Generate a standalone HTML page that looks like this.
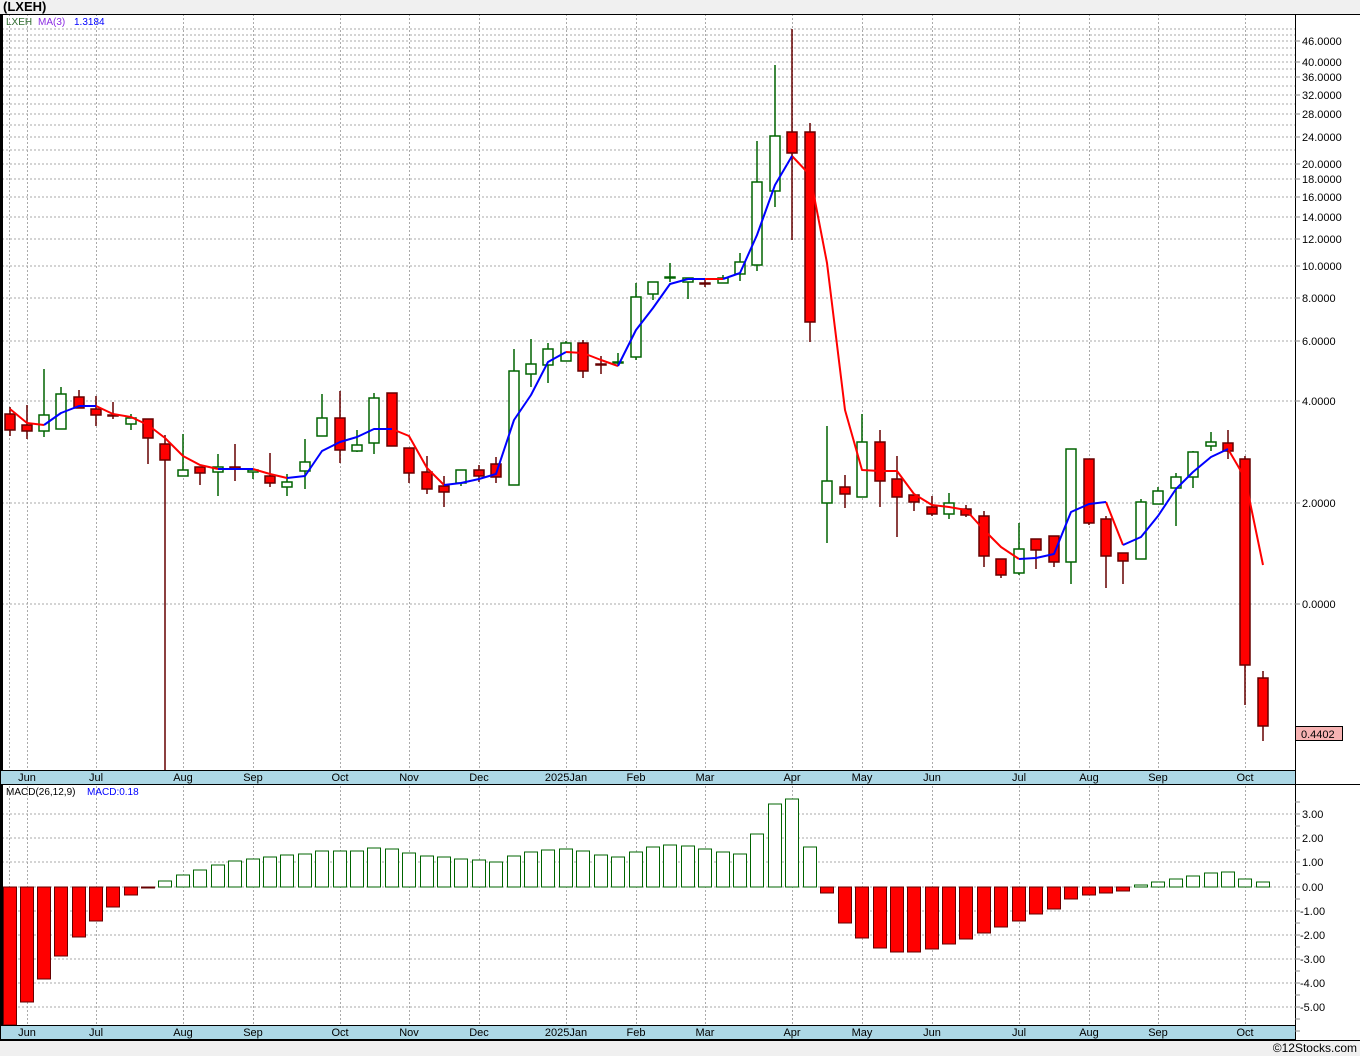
<!DOCTYPE html>
<html><head><meta charset="utf-8"><style>
html,body{margin:0;padding:0;background:#f0f0f0;}
svg{display:block;font-family:"Liberation Sans",sans-serif;}
</style></head><body>
<svg width="1360" height="1056" viewBox="0 0 1360 1056" xmlns="http://www.w3.org/2000/svg">
<rect x="0" y="0" width="1360" height="1056" fill="#f0f0f0"/>
<text x="3" y="11" font-size="13" font-weight="bold" fill="#000">(LXEH)</text>
<rect x="0" y="14" width="1360" height="1026" fill="#fff"/>
<g stroke="#aaa" stroke-width="1" stroke-dasharray="2,2" fill="none">
<path d="M2 29H1295M2 35H1295M2 41H1295M2 48H1295M2 55H1295M2 62H1295M2 69H1295M2 77H1295M2 86H1295M2 95H1295M2 104H1295M2 114H1295M2 125H1295M2 137H1295M2 150H1295M2 164H1295M2 179H1295M2 197H1295M2 217H1295M2 239H1295M2 266H1295M2 298H1295M2 341H1295M2 401H1295M2 503H1295M2 604H1295"/>
<path d="M2 814H1295M2 838H1295M2 862H1295M2 887H1295M2 911H1295M2 935H1295M2 959H1295M2 983H1295M2 1007H1295"/>
<path d="M9.5 14V1025M27.5 14V1025M96.5 14V1025M183.5 14V1025M253.5 14V1025M340.5 14V1025M409.5 14V1025M479.5 14V1025M566.5 14V1025M636.5 14V1025M705.5 14V1025M792.5 14V1025M862.5 14V1025M932.5 14V1025M1019.5 14V1025M1089.5 14V1025M1158.5 14V1025M1245.5 14V1025"/>
</g>
<path fill="none" stroke="#006400" stroke-width="1.5" d="M44 369V437M61 387V429M131 414V430M183 434V476M218 454V496M253 470V479M287 474V496M305 439V489M322 394V436M357 430V452M374 393V454M461 470V486M514 349V485M531 339V387M548 343V383M566 341V361M618 353V366M636 283V360M653 282V300M670 263V282M688 278V299M723 275V283M740 253V281M757 141V271M775 65V207M827 426V543M862 414V497M949 493V519M1019 523V575M1071 449V584M1141 499V559M1158 487V504M1176 473V526M1193 451V488M1211 432V451"/>
<path fill="none" stroke="#660000" stroke-width="1.5" d="M10 407V436M27 405V439M79 390V408M96 396V426M113 402V419M148 419V464M165 435V770M200 467V485M235 444V481M270 453V487M340 391V463M392 393V446M409 448V483M427 456V494M444 476V507M479 465V482M496 457V483M583 340V378M601 356V374M705 278V287M792 29V240M810 123V342M845 475V508M880 430V507M897 456V537M914 495V511M932 496V516M966 505V517M984 511V567M1001 559V578M1036 539V569M1054 536V567M1089 459V525M1106 516V588M1123 553V584M1228 430V459M1245 456V705M1263 671V741"/>
<g fill="#fff" stroke="#006400" stroke-width="1.5">
<rect x="39" y="415" width="10" height="16"/><rect x="56" y="394" width="10" height="35"/><rect x="126" y="418" width="10" height="6"/><rect x="178" y="470" width="10" height="6"/><rect x="213" y="467" width="10" height="5"/><rect x="248" y="470" width="10" height="2"/><rect x="282" y="482" width="10" height="5"/><rect x="300" y="462" width="10" height="9"/><rect x="317" y="418" width="10" height="18"/><rect x="352" y="445" width="10" height="6"/><rect x="369" y="398" width="10" height="45"/><rect x="456" y="470" width="10" height="13"/><rect x="509" y="371" width="10" height="114"/><rect x="526" y="364" width="10" height="10"/><rect x="543" y="349" width="10" height="16"/><rect x="561" y="343" width="10" height="18"/><rect x="613" y="362" width="10" height="1"/><rect x="631" y="297" width="10" height="60"/><rect x="648" y="282" width="10" height="12"/><rect x="665" y="277" width="10" height="1"/><rect x="683" y="278" width="10" height="4"/><rect x="718" y="278" width="10" height="5"/><rect x="735" y="262" width="10" height="12"/><rect x="752" y="182" width="10" height="83"/><rect x="770" y="136" width="10" height="55"/><rect x="822" y="481" width="10" height="22"/><rect x="857" y="442" width="10" height="55"/><rect x="944" y="503" width="10" height="11"/><rect x="1014" y="549" width="10" height="24"/><rect x="1066" y="449" width="10" height="113"/><rect x="1136" y="502" width="10" height="57"/><rect x="1153" y="491" width="10" height="13"/><rect x="1171" y="477" width="10" height="11"/><rect x="1188" y="452" width="10" height="25"/><rect x="1206" y="442" width="10" height="4"/>
</g>
<g fill="#ff0000" stroke="#660000" stroke-width="1.5">
<rect x="5" y="414" width="10" height="16"/><rect x="22" y="425" width="10" height="6"/><rect x="74" y="397" width="10" height="11"/><rect x="91" y="409" width="10" height="6"/><rect x="108" y="415" width="10" height="1"/><rect x="143" y="419" width="10" height="19"/><rect x="160" y="444" width="10" height="16"/><rect x="195" y="467" width="10" height="6"/><rect x="230" y="467" width="10" height="2"/><rect x="265" y="476" width="10" height="7"/><rect x="335" y="418" width="10" height="32"/><rect x="387" y="393" width="10" height="53"/><rect x="404" y="448" width="10" height="25"/><rect x="422" y="472" width="10" height="17"/><rect x="439" y="486" width="10" height="6"/><rect x="474" y="470" width="10" height="6"/><rect x="491" y="464" width="10" height="13"/><rect x="578" y="343" width="10" height="28"/><rect x="596" y="364" width="10" height="1"/><rect x="700" y="283" width="10" height="1"/><rect x="787" y="132" width="10" height="21"/><rect x="805" y="132" width="10" height="190"/><rect x="840" y="487" width="10" height="7"/><rect x="875" y="442" width="10" height="39"/><rect x="892" y="479" width="10" height="18"/><rect x="909" y="495" width="10" height="7"/><rect x="927" y="507" width="10" height="7"/><rect x="961" y="509" width="10" height="6"/><rect x="979" y="516" width="10" height="40"/><rect x="996" y="559" width="10" height="16"/><rect x="1031" y="539" width="10" height="11"/><rect x="1049" y="536" width="10" height="26"/><rect x="1084" y="459" width="10" height="64"/><rect x="1101" y="519" width="10" height="37"/><rect x="1118" y="553" width="10" height="8"/><rect x="1223" y="443" width="10" height="8"/><rect x="1240" y="459" width="10" height="206"/><rect x="1258" y="678" width="10" height="48"/>
</g>
<path fill="none" stroke="#ff0000" stroke-width="2" stroke-linejoin="round" d="M10 409L27 423L44 425M96 406L113 414L131 417L148 425L165 438L183 456L200 465L218 469M253 469L270 474L287 478M392 429L409 436L427 468L444 485M566 352L583 353L601 360L618 366M705 279L723 279M792 156L810 175L827 263L845 410L862 470L880 471L897 471L914 494L932 505L949 507L966 510L984 530L1001 547L1019 559M1106 502L1123 545M1228 449L1245 478L1263 565"/>
<path fill="none" stroke="#0000ff" stroke-width="2" stroke-linejoin="round" d="M44 425L61 413L79 406L96 406M218 469L235 469L253 469M287 478L305 476L322 451L340 442L357 437L374 429L392 429M444 485L461 483L479 479L496 474L514 420L531 395L548 362L566 352M618 366L636 330L653 308L670 284L688 279L705 279M723 279L740 273L757 235L775 185L792 156M1019 559L1036 558L1054 554L1071 512L1089 504L1106 502M1123 545L1141 537L1158 516L1176 489L1193 472L1211 457L1228 449"/>
<g fill="#ff0000" stroke="#660000" stroke-width="1">
<rect x="3.5" y="887" width="13" height="138"/><rect x="20.5" y="887" width="13" height="115"/><rect x="37.5" y="887" width="13" height="92"/><rect x="54.5" y="887" width="13" height="69"/><rect x="72.5" y="887" width="13" height="50"/><rect x="89.5" y="887" width="13" height="34"/><rect x="106.5" y="887" width="13" height="20"/><rect x="124.5" y="887" width="13" height="8"/><rect x="141.5" y="887" width="13" height="1"/>
<rect x="820.5" y="887" width="13" height="6"/><rect x="838.5" y="887" width="13" height="36"/><rect x="855.5" y="887" width="13" height="51"/><rect x="873.5" y="887" width="13" height="61"/><rect x="890.5" y="887" width="13" height="65"/><rect x="907.5" y="887" width="13" height="65"/><rect x="925.5" y="887" width="13" height="62"/><rect x="942.5" y="887" width="13" height="57"/><rect x="959.5" y="887" width="13" height="52"/><rect x="977.5" y="887" width="13" height="46"/><rect x="994.5" y="887" width="13" height="40"/><rect x="1012.5" y="887" width="13" height="34"/><rect x="1029.5" y="887" width="13" height="27"/><rect x="1047.5" y="887" width="13" height="22"/><rect x="1064.5" y="887" width="13" height="12"/><rect x="1082.5" y="887" width="13" height="8"/><rect x="1099.5" y="887" width="13" height="6"/><rect x="1116.5" y="887" width="13" height="4"/>
</g>
<g fill="#fff" stroke="#006400" stroke-width="1">
<rect x="158.5" y="881" width="13" height="6"/><rect x="176.5" y="875" width="13" height="12"/><rect x="193.5" y="870" width="13" height="17"/><rect x="211.5" y="865" width="13" height="22"/><rect x="228.5" y="861" width="13" height="26"/><rect x="246.5" y="859" width="13" height="28"/><rect x="263.5" y="857" width="13" height="30"/><rect x="280.5" y="855" width="13" height="32"/><rect x="298.5" y="854" width="13" height="33"/><rect x="315.5" y="851" width="13" height="36"/><rect x="333.5" y="851" width="13" height="36"/><rect x="350.5" y="851" width="13" height="36"/><rect x="367.5" y="848" width="13" height="39"/><rect x="385.5" y="849" width="13" height="38"/><rect x="402.5" y="853" width="13" height="34"/><rect x="420.5" y="856" width="13" height="31"/><rect x="437.5" y="857" width="13" height="30"/><rect x="454.5" y="859" width="13" height="28"/><rect x="472.5" y="860" width="13" height="27"/><rect x="489.5" y="862" width="13" height="25"/><rect x="507.5" y="856" width="13" height="31"/><rect x="524.5" y="852" width="13" height="35"/><rect x="541.5" y="850" width="13" height="37"/><rect x="559.5" y="849" width="13" height="38"/><rect x="576.5" y="851" width="13" height="36"/><rect x="594.5" y="855" width="13" height="32"/><rect x="611.5" y="857" width="13" height="30"/><rect x="629.5" y="852" width="13" height="35"/><rect x="646.5" y="847" width="13" height="40"/><rect x="663.5" y="845" width="13" height="42"/><rect x="681.5" y="846" width="13" height="41"/><rect x="698.5" y="849" width="13" height="38"/><rect x="716.5" y="852" width="13" height="35"/><rect x="733.5" y="854" width="13" height="33"/><rect x="750.5" y="834" width="13" height="53"/><rect x="768.5" y="804" width="13" height="83"/><rect x="785.5" y="799" width="13" height="88"/><rect x="803.5" y="847" width="13" height="40"/>
<rect x="1134.5" y="885" width="13" height="2"/><rect x="1151.5" y="882" width="13" height="5"/><rect x="1169.5" y="879" width="13" height="8"/><rect x="1186.5" y="876" width="13" height="11"/><rect x="1204.5" y="873" width="13" height="14"/><rect x="1221.5" y="872" width="13" height="15"/><rect x="1238.5" y="879" width="13" height="8"/><rect x="1256.5" y="882" width="13" height="5"/>
</g>
<rect x="0" y="14" width="3" height="1011" fill="#000"/>
<path d="M0 14.5H1360M1295.5 14V1040" stroke="#000" fill="none"/>
<rect x="0.5" y="770.5" width="1295" height="14" fill="#add8e6" stroke="#000"/>
<rect x="0.5" y="1025.5" width="1295" height="14" fill="#add8e6" stroke="#000"/>
<path d="M1295 784.5H1360M0 1040.5H1360" stroke="#000"/>
<g stroke="#888" fill="none">
<path d="M1295 41H1300M1295 62H1300M1295 77H1300M1295 95H1300M1295 114H1300M1295 137H1300M1295 164H1300M1295 179H1300M1295 197H1300M1295 217H1300M1295 239H1300M1295 266H1300M1295 298H1300M1295 341H1300M1295 401H1300M1295 503H1300M1295 604H1300"/>
<path d="M1295 802H1300M1295 814H1300M1295 826H1300M1295 838H1300M1295 850H1300M1295 862H1300M1295 874H1300M1295 887H1300M1295 899H1300M1295 911H1300M1295 923H1300M1295 935H1300M1295 947H1300M1295 959H1300M1295 971H1300M1295 983H1300M1295 995H1300M1295 1007H1300M1295 1019H1300M1295 1031H1300"/>
</g>
<g font-size="11" fill="#000">
<text x="1302" y="45">46.0000</text><text x="1302" y="66">40.0000</text><text x="1302" y="81">36.0000</text><text x="1302" y="99">32.0000</text><text x="1302" y="118">28.0000</text><text x="1302" y="141">24.0000</text><text x="1302" y="168">20.0000</text><text x="1302" y="183">18.0000</text><text x="1302" y="201">16.0000</text><text x="1302" y="221">14.0000</text><text x="1302" y="243">12.0000</text><text x="1302" y="270">10.0000</text><text x="1302" y="302">8.0000</text><text x="1302" y="345">6.0000</text><text x="1302" y="405">4.0000</text><text x="1302" y="507">2.0000</text><text x="1302" y="608">0.0000</text>
<text x="1302" y="818">3.00</text><text x="1302" y="842">2.00</text><text x="1302" y="866">1.00</text><text x="1302" y="891">0.00</text><text x="1300" y="915">-1.00</text><text x="1300" y="939">-2.00</text><text x="1300" y="963">-3.00</text><text x="1300" y="987">-4.00</text><text x="1300" y="1011">-5.00</text>
</g>
<rect x="1295.5" y="726.5" width="47" height="14" fill="#f7b3b3" stroke="#000"/>
<text x="1301" y="738" font-size="11">0.4402</text>
<g font-size="11" fill="#000" text-anchor="middle">
<text x="27" y="781">Jun</text><text x="96" y="781">Jul</text><text x="183" y="781">Aug</text><text x="253" y="781">Sep</text><text x="340" y="781">Oct</text><text x="409" y="781">Nov</text><text x="479" y="781">Dec</text><text x="566" y="781">2025Jan</text><text x="636" y="781">Feb</text><text x="705" y="781">Mar</text><text x="792" y="781">Apr</text><text x="862" y="781">May</text><text x="932" y="781">Jun</text><text x="1019" y="781">Jul</text><text x="1089" y="781">Aug</text><text x="1158" y="781">Sep</text><text x="1245" y="781">Oct</text>
<text x="27" y="1036">Jun</text><text x="96" y="1036">Jul</text><text x="183" y="1036">Aug</text><text x="253" y="1036">Sep</text><text x="340" y="1036">Oct</text><text x="409" y="1036">Nov</text><text x="479" y="1036">Dec</text><text x="566" y="1036">2025Jan</text><text x="636" y="1036">Feb</text><text x="705" y="1036">Mar</text><text x="792" y="1036">Apr</text><text x="862" y="1036">May</text><text x="932" y="1036">Jun</text><text x="1019" y="1036">Jul</text><text x="1089" y="1036">Aug</text><text x="1158" y="1036">Sep</text><text x="1245" y="1036">Oct</text>
</g>
<g font-size="10">
<text x="6" y="25" fill="#2e6b2e">LXEH</text><text x="38" y="25" fill="#8a2be2">MA(3)</text><text x="74" y="25" fill="#0000ff">1.3184</text>
<text x="6" y="795" fill="#000">MACD(26,12,9)</text><text x="87" y="795" fill="#0000ff">MACD:0.18</text>
</g>
<text x="1357" y="1052" font-size="12" text-anchor="end" fill="#000">©12Stocks.com</text>
</svg>
</body></html>
